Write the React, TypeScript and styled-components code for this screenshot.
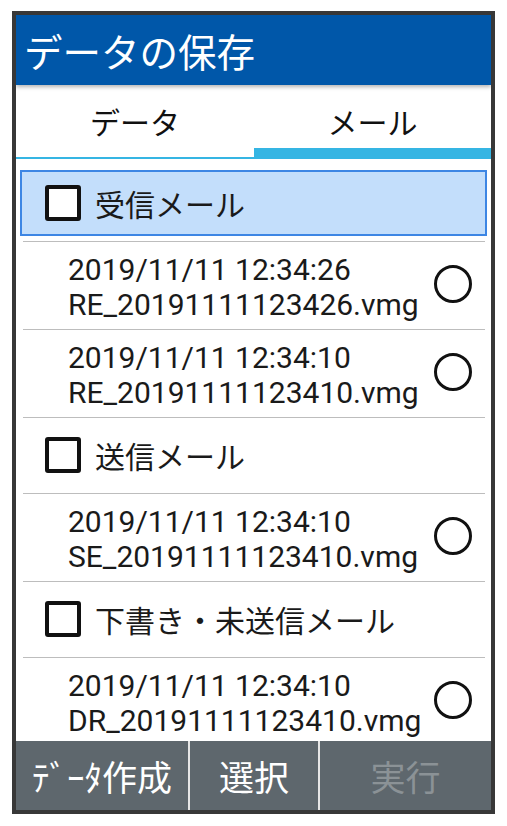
import React from "react"
import styled, { createGlobalStyle } from "styled-components"

const GlobalStyle = createGlobalStyle`
  html, body {
    margin: 0;
    padding: 0;
    background: #ffffff;
  }
  body {
    font-family: Roboto, "Noto Sans CJK JP", sans-serif;
    color: #1a1a1a;
  }
`

type MailItem = { date: string; file: string }
type Group = { label: string; selected?: boolean; items: Array<MailItem> }

const groups: Array<Group> = [
  {
    label: "受信メール",
    selected: true,
    items: [
      { date: "2019/11/11 12:34:26", file: "RE_20191111123426.vmg" },
      { date: "2019/11/11 12:34:10", file: "RE_20191111123410.vmg" },
    ],
  },
  {
    label: "送信メール",
    items: [{ date: "2019/11/11 12:34:10", file: "SE_20191111123410.vmg" }],
  },
  {
    label: "下書き・未送信メール",
    items: [{ date: "2019/11/11 12:34:10", file: "DR_20191111123410.vmg" }],
  },
]

export default function App() {
  return (
    <>
      <GlobalStyle />
      <S.Frame>
        <S.Header>データの保存</S.Header>
        <S.Tabs>
          <S.Tab>データ</S.Tab>
          <S.Tab active>メール</S.Tab>
        </S.Tabs>
        <S.List>
          {groups.map((group) => (
            <React.Fragment key={group.label}>
              <S.GroupRow>
                <S.GroupBox selected={group.selected}>
                  <S.Checkbox />
                  <S.GroupLabel>{group.label}</S.GroupLabel>
                </S.GroupBox>
              </S.GroupRow>
              <S.Divider />
              {group.items.map((item) => (
                <React.Fragment key={item.file}>
                  <S.ItemRow>
                    <S.ItemText>
                      <div>{item.date}</div>
                      <div>{item.file}</div>
                    </S.ItemText>
                    <S.Radio />
                  </S.ItemRow>
                  <S.Divider />
                </React.Fragment>
              ))}
            </React.Fragment>
          ))}
        </S.List>
        <S.BottomBar>
          <S.SoftKey>ﾃﾞｰﾀ作成</S.SoftKey>
          <S.SoftKey>選択</S.SoftKey>
          <S.SoftKey disabled>実行</S.SoftKey>
        </S.BottomBar>
      </S.Frame>
    </>
  )
}

const S = {
  Frame: styled.div`
    box-sizing: border-box;
    margin: 11px 0 0 12px;
    width: 483px;
    height: 803px;
    border: 4px solid #383838;
    display: flex;
    flex-direction: column;
    overflow: hidden;
    background: #ffffff;
  `,
  Header: styled.div`
    position: relative;
    z-index: 1;
    height: 70px;
    flex: none;
    display: flex;
    align-items: center;
    padding-left: 8px;
    background: #0057a9;
    color: #ffffff;
    font-size: 38.5px;
    box-shadow: 0 2px 4px rgba(0, 0, 0, 0.3);
  `,
  Tabs: styled.div`
    height: 74px;
    flex: none;
    display: grid;
    grid-template-columns: 238px 1fr;
  `,
  Tab: styled.div<{ active?: boolean }>`
    box-sizing: border-box;
    display: flex;
    align-items: center;
    justify-content: center;
    padding-top: ${(p) => (p.active ? "9px" : "0")};
    font-size: 30px;
    color: #111111;
    border-bottom: ${(p) => (p.active ? "11px" : "2px")} solid #35b5e3;
  `,
  List: styled.div`
    flex: 1;
    overflow: hidden;
    padding: 7px 4px 0;
  `,
  GroupRow: styled.div`
    height: 75px;
    display: flex;
    align-items: center;
  `,
  GroupBox: styled.div<{ selected?: boolean }>`
    box-sizing: border-box;
    flex: 1;
    height: 66px;
    margin-top: -1px;
    display: flex;
    align-items: center;
    gap: 14px;
    padding-left: 23px;
    border: 2px solid ${(p) => (p.selected ? "#3d86e4" : "transparent")};
    background: ${(p) => (p.selected ? "#c3defb" : "transparent")};
  `,
  Checkbox: styled.div`
    box-sizing: border-box;
    width: 36px;
    height: 36px;
    border: 4px solid #111111;
    border-radius: 3px;
    background: #ffffff;
  `,
  GroupLabel: styled.span`
    font-size: 30px;
    color: #1a1a1a;
  `,
  Divider: styled.div`
    height: 1px;
    margin: 0 2px 0 3px;
    background: #bdbdbd;
  `,
  ItemRow: styled.div`
    height: 87px;
    display: flex;
    align-items: center;
    justify-content: space-between;
    padding: 0 15px 0 48px;
  `,
  ItemText: styled.div`
    font-size: 30px;
    line-height: 35px;
    color: #1a1a1a;
    padding-top: 3px;
  `,
  Radio: styled.div`
    box-sizing: border-box;
    width: 38px;
    height: 38px;
    border: 3.5px solid #111111;
    border-radius: 50%;
    margin-bottom: 3px;
  `,
  BottomBar: styled.div`
    height: 69px;
    flex: none;
    display: grid;
    grid-template-columns: 172px 2px 128px 2px 1fr;
    background: #e6e6e6;
  `,
  SoftKey: styled.div<{ disabled?: boolean }>`
    display: flex;
    align-items: center;
    justify-content: center;
    background: #5e676d;
    font-size: 35px;
    color: ${(p) => (p.disabled ? "#8b9296" : "#ffffff")};
    &:nth-child(2) {
      grid-column: 3;
    }
    &:nth-child(3) {
      grid-column: 5;
    }
  `,
}
